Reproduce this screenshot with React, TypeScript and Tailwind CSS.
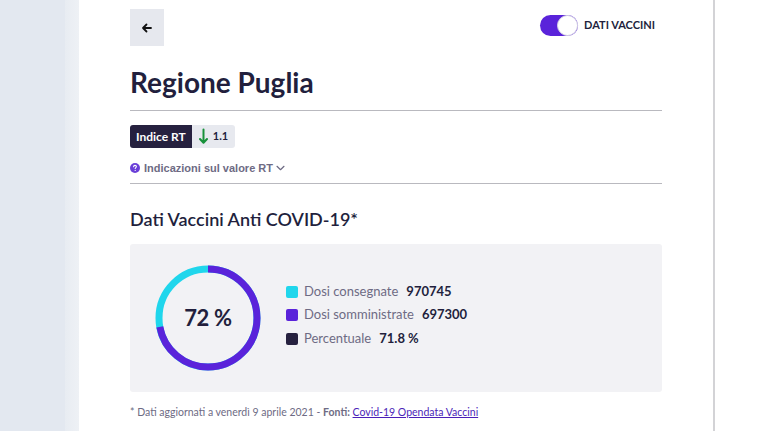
import React from "react";

const DONUT_R = 49;
const CIRC = 2 * Math.PI * DONUT_R;

function Donut({ pct }: { pct: number }) {
  const done = (CIRC * pct) / 100;
  return (
    <div className="relative h-[112px] w-[112px]">
      <svg width="112" height="112" viewBox="0 0 112 112">
        <circle cx="56" cy="56" r={DONUT_R} fill="none" stroke="#20d6ec" strokeWidth="7" />
        <circle
          cx="56"
          cy="56"
          r={DONUT_R}
          fill="none"
          stroke="#5a23da"
          strokeWidth="7"
          strokeDasharray={`${done} ${CIRC}`}
          transform="rotate(-90 56 56)"
        />
      </svg>
      <div className="absolute inset-0 flex items-center justify-center text-[22px] font-bold tracking-[-0.3px] text-[#221f3d]">
        72 %
      </div>
    </div>
  );
}

function Legend({ color, label, value }: { color: string; label: string; value: string }) {
  return (
    <div className="flex items-center h-[23.5px]">
      <span className="h-[12px] w-[12px] rounded-[2px] mr-[6px]" style={{ background: color }} />
      <span className="text-[13px] text-[#6e6b84]">{label}</span>
      <span className="ml-[8px] text-[13px] font-bold text-[#221f3d]">{value}</span>
    </div>
  );
}

export default function App() {
  return (
    <div className="flex h-[431px] w-[767px] overflow-hidden bg-white font-['Lato',sans-serif]">
      <div className="w-[65px] bg-[#e3e8f0]" />
      <div className="w-[14px] bg-gradient-to-r from-[#e8ecf2] to-[#eef1f5]" />
      <main className="w-[634px] bg-white px-[51px] pt-[9px]">
        <div className="flex items-start justify-between">
          <button className="flex h-[37px] w-[34px] items-center justify-center bg-[#e6e8ee]">
            <svg width="12" height="12" viewBox="0 0 12 12" fill="none" stroke="#111" strokeWidth="1.8" strokeLinecap="round" strokeLinejoin="round">
              <path d="M10 6H2M5.5 2.5 2 6l3.5 3.5" />
            </svg>
          </button>
          <div className="mr-[7px] mt-[6px] flex items-center">
            <div className="relative ml-[1px] h-[21px] w-[38px] rounded-full bg-[#5a23da]">
              <div className="absolute right-0 top-0 h-[21px] w-[21px] rounded-full border border-[#d8d6e4] bg-white" />
            </div>
            <span className="ml-[6px] text-[11px] font-bold text-[#221f3d]">DATI VACCINI</span>
          </div>
        </div>

        <h1 className="mt-[18px] text-[28px] font-bold leading-[36px] text-[#221f3d]">Regione Puglia</h1>
        <div className="mt-[10px] h-px bg-[#b9b9bf]" />

        <div className="mt-[14px] flex h-[23px] w-fit overflow-hidden rounded-[3px]">
          <div className="flex items-center bg-[#26213f] px-[6px] text-[12px] font-bold text-white">Indice RT</div>
          <div className="flex items-center bg-[#e7e9ef] pl-[7px] pr-[7px]">
            <svg width="9" height="17" viewBox="0 0 9 17" fill="none" stroke="#18913a" strokeWidth="2" strokeLinecap="round" strokeLinejoin="round">
              <path d="M4.5 1.5v13M1 11l3.5 3.8L8 11" />
            </svg>
            <span className="ml-[5px] text-[11px] font-bold text-[#221f3d]">1.1</span>
          </div>
        </div>

        <div className="mt-[12px] flex items-center font-['Liberation_Sans',sans-serif] text-[11px] font-bold text-[#6e6b84]">
          <svg width="10" height="10" viewBox="0 0 10 10" className="mr-[4px]">
            <circle cx="5" cy="5" r="5" fill="#6a3fd8" />
            <path d="M3.6 3.8c0-.9.6-1.4 1.4-1.4s1.4.5 1.4 1.2c0 .9-1.2 1-1.2 1.9" fill="none" stroke="#fff" strokeWidth="1.1" strokeLinecap="round" />
            <circle cx="5.2" cy="7.4" r="0.6" fill="#fff" />
          </svg>
          Indicazioni sul valore RT
          <svg width="9" height="6" viewBox="0 0 9 6" className="ml-[3px]" fill="none" stroke="#6e6b84" strokeWidth="1.2" strokeLinecap="round" strokeLinejoin="round">
            <path d="M1 1.3l3.5 3.4L8 1.3" />
          </svg>
        </div>
        <div className="mt-[6px] h-px bg-[#b9b9bf]" />

        <h2 className="mt-[23px] text-[18px] font-semibold leading-[24px] text-[#221f3d]">Dati Vaccini Anti COVID-19*</h2>

        <div className="mt-[13px] flex h-[148px] items-center rounded-[3px] bg-[#f2f2f5] pl-[22px]">
          <Donut pct={72} />
          <div className="mb-[5px] ml-[22px] flex flex-col">
            <Legend color="#20d6ec" label="Dosi consegnate" value="970745" />
            <Legend color="#5a23da" label="Dosi somministrate" value="697300" />
            <Legend color="#26213f" label="Percentuale" value="71.8 %" />
          </div>
        </div>

        <p className="mt-[13px] text-[10.5px] text-[#6e6b84]">
          * Dati aggiornati a venerdì 9 aprile 2021 - <span className="font-bold">Fonti:</span>{" "}
          <a className="text-[#4b1fb8] underline" href="#">Covid-19 Opendata Vaccini</a>
        </p>
      </main>
      <div className="w-[2px] bg-[#d3d3d6]" />
      <div className="flex-1 bg-white" />
    </div>
  );
}
